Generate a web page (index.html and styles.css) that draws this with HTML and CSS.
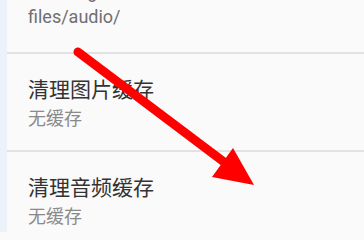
FILE: index.html
```html
<!DOCTYPE html>
<html lang="zh-CN">
<head>
<meta charset="utf-8">
<link rel="stylesheet" href="styles.css">
</head>
<body>
<div class="screen">
  <div class="rail"></div>
  <div class="list">
    <div class="row first">
      <div class="summary">data/org<br>files/audio/</div>
    </div>
    <div class="row">
      <div class="title">清理图片缓存</div>
      <div class="summary">无缓存</div>
    </div>
    <div class="row">
      <div class="title">清理音频缓存</div>
      <div class="summary">无缓存</div>
    </div>
  </div>
  <svg class="arrow" width="364" height="232" viewBox="0 0 364 232">
    <line x1="78" y1="52" x2="224" y2="162" stroke="#ff0000" stroke-width="9" stroke-linecap="round"/>
    <polygon points="233,148 212,177 254,185" fill="#ff0000"/>
  </svg>
</div>
</body>
</html>
```
FILE: styles.css
```css
html, body {
  margin: 0;
  padding: 0;
  background: #fafafa;
}
.screen {
  position: relative;
  width: 364px;
  height: 232px;
  overflow: hidden;
  display: flex;
  font-family: Roboto, "Noto Sans CJK SC", sans-serif;
}
.rail {
  width: 7px;
  flex: none;
  background: #edf1fa;
}
.list {
  flex: 1;
  display: flex;
  flex-direction: column;
  margin-top: -21px;
}
.row {
  padding: 21px 0 19px 21px;
  border-top: 2px solid #e2e2e2;
}
.row.first {
  border-top: none;
  padding-top: 0;
  padding-bottom: 23px;
}
.title {
  font-size: 21px;
  line-height: 31px;
  color: #333333;
  white-space: nowrap;
}
.summary {
  font-size: 18px;
  line-height: 25px;
  color: #8a8a8a;
  white-space: nowrap;
}
.first .summary {
  color: #6f6f6f;
}
.arrow {
  position: absolute;
  left: 0;
  top: 0;
}
```
